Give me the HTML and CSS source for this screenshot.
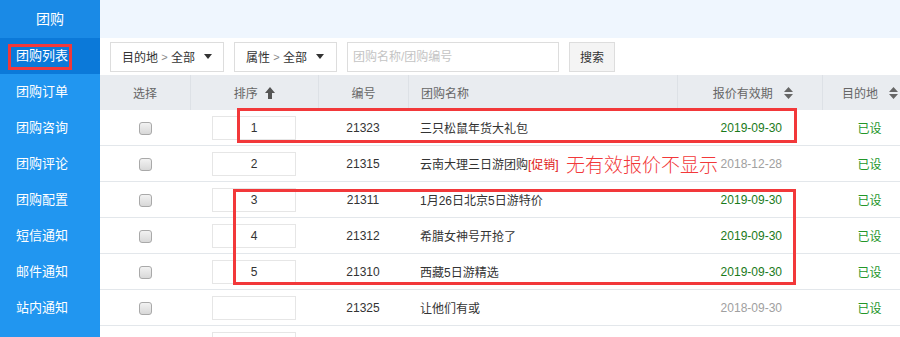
FILE: index.html
```html
<!DOCTYPE html>
<html lang="zh-CN">
<head>
    <meta charset="UTF-8">
    <title>团购列表</title>
    <link rel="stylesheet" href="styles.css">
</head>
<body>
<div class="page">
    <div class="sidebar">
        <div class="side-title">团购</div>
        <a class="side-item active">团购列表</a>
        <a class="side-item">团购订单</a>
        <a class="side-item">团购咨询</a>
        <a class="side-item">团购评论</a>
        <a class="side-item">团购配置</a>
        <a class="side-item">短信通知</a>
        <a class="side-item">邮件通知</a>
        <a class="side-item">站内通知</a>
        <a class="side-item"></a>
    </div>

    <div class="main">
        <div class="topband"></div>

        <div class="toolbar">
            <div class="select select-dest">目的地 <span class="gt">&gt;</span> 全部 <i class="caret"></i></div>
            <div class="select select-attr">属性 <span class="gt">&gt;</span> 全部 <i class="caret"></i></div>
            <input class="search-input" type="text" placeholder="团购名称/团购编号">
            <button class="search-btn">搜索</button>
        </div>

        <table class="list">
            <colgroup>
                <col class="c-check">
                <col class="c-sort">
                <col class="c-id">
                <col class="c-name">
                <col class="c-date">
                <col class="c-dest">
            </colgroup>
            <thead>
                <tr>
                    <th class="center">选择</th>
                    <th class="center">排序 <svg class="ico-up" width="10" height="12" viewBox="0 0 10 12"><path d="M5 0 L10 6 L7 6 L7 12 L3 12 L3 6 L0 6 Z" fill="#555"/></svg></th>
                    <th class="center">编号</th>
                    <th class="left">团购名称</th>
                    <th class="right">报价有效期 <svg class="ico-sort" width="9" height="12" viewBox="0 0 9 12"><path d="M4.5 0 L9 5 L0 5 Z M4.5 12 L9 7 L0 7 Z" fill="#666"/></svg></th>
                    <th class="left dest-h">目的地 <svg class="ico-sort" width="9" height="12" viewBox="0 0 9 12"><path d="M4.5 0 L9 5 L0 5 Z M4.5 12 L9 7 L0 7 Z" fill="#666"/></svg></th>
                </tr>
            </thead>
            <tbody>
                <tr>
                    <td class="center"><input type="checkbox" class="chk"></td>
                    <td class="center"><div class="sort-box">1</div></td>
                    <td class="center">21323</td>
                    <td class="left">三只松鼠年货大礼包</td>
                    <td class="right date ok">2019-09-30</td>
                    <td class="center set">已设</td>
                </tr>
                <tr>
                    <td class="center"><input type="checkbox" class="chk"></td>
                    <td class="center"><div class="sort-box">2</div></td>
                    <td class="center">21315</td>
                    <td class="left">云南大理三日游团购<span class="promo">[促销]</span></td>
                    <td class="right date old">2018-12-28</td>
                    <td class="center set">已设</td>
                </tr>
                <tr>
                    <td class="center"><input type="checkbox" class="chk"></td>
                    <td class="center"><div class="sort-box">3</div></td>
                    <td class="center">21311</td>
                    <td class="left">1月26日北京5日游特价</td>
                    <td class="right date ok">2019-09-30</td>
                    <td class="center set">已设</td>
                </tr>
                <tr>
                    <td class="center"><input type="checkbox" class="chk"></td>
                    <td class="center"><div class="sort-box">4</div></td>
                    <td class="center">21312</td>
                    <td class="left">希腊女神号开抢了</td>
                    <td class="right date ok">2019-09-30</td>
                    <td class="center set">已设</td>
                </tr>
                <tr>
                    <td class="center"><input type="checkbox" class="chk"></td>
                    <td class="center"><div class="sort-box">5</div></td>
                    <td class="center">21310</td>
                    <td class="left">西藏5日游精选</td>
                    <td class="right date ok">2019-09-30</td>
                    <td class="center set">已设</td>
                </tr>
                <tr>
                    <td class="center"><input type="checkbox" class="chk"></td>
                    <td class="center"><div class="sort-box"></div></td>
                    <td class="center">21325</td>
                    <td class="left">让他们有或</td>
                    <td class="right date old">2018-09-30</td>
                    <td class="center set">已设</td>
                </tr>
                <tr>
                    <td class="center"><input type="checkbox" class="chk"></td>
                    <td class="center"><div class="sort-box"></div></td>
                    <td class="center"></td>
                    <td class="left"></td>
                    <td class="right"></td>
                    <td class="center"></td>
                </tr>
            </tbody>
        </table>
    </div>

    <!-- 标注 -->
    <div class="mark mark-menu"></div>
    <div class="mark mark-row1"></div>
    <div class="mark mark-rows"></div>
    <div class="mark-text">无有效报价不显示</div>
</div>
</body>
</html>
```

FILE: styles.css
```css
* {
    margin: 0;
    padding: 0;
    box-sizing: border-box;
}

body {
    font-family: "Liberation Sans", "Noto Sans CJK SC", sans-serif;
    font-size: 12px;
    color: #333;
    background: #fff;
}

.page {
    position: relative;
    display: flex;
    width: 900px;
    height: 337px;
    overflow: hidden;
}

/* 侧边栏 */
.sidebar {
    width: 100px;
    flex-shrink: 0;
    background-color: #2196f0;
    display: flex;
    flex-direction: column;
}

.side-title {
    height: 38px;
    line-height: 38px;
    text-align: center;
    background-color: #1a8ae6;
    color: #fff;
    font-size: 14px;
}

.side-item {
    display: block;
    height: 36px;
    line-height: 36px;
    padding-left: 16px;
    color: #fff;
    font-size: 13px;
}

.side-item.active {
    background-color: #0b79d9;
}

/* 主区域 */
.main {
    flex: 1;
    overflow: hidden;
}

.topband {
    height: 38px;
    background-color: #eff6fe;
}

.toolbar {
    height: 37px;
    display: flex;
    align-items: center;
    padding-left: 10px;
    gap: 10px;
}

.select {
    height: 30px;
    border: 1px solid #ddd;
    display: flex;
    align-items: center;
    padding: 0 11px;
    color: #333;
    white-space: pre;
}

.select-dest {
    width: 114px;
}

.select-attr {
    width: 103px;
}

.gt {
    color: #888;
    font-size: 11px;
}

.caret {
    display: inline-block;
    width: 0;
    height: 0;
    border-left: 4px solid transparent;
    border-right: 4px solid transparent;
    border-top: 5px solid #333;
    margin-left: 6px;
}

.search-input {
    width: 212px;
    height: 30px;
    border: 1px solid #ddd;
    padding-left: 5px;
    font-family: inherit;
    font-size: 12px;
    outline: none;
}

.search-input::placeholder {
    color: #c4c4c4;
}

.search-btn {
    width: 46px;
    height: 30px;
    border: 1px solid #ddd;
    background-color: #f4f4f4;
    font-family: inherit;
    font-size: 12px;
    color: #333;
}

/* 表格 */
.list {
    table-layout: fixed;
    width: 817px;
    border-collapse: separate;
    border-spacing: 0;
}

.c-check { width: 90px; }
.c-sort { width: 128px; }
.c-id { width: 90px; }
.c-name { width: 269px; }
.c-date { width: 145px; }
.c-dest { width: 95px; }

.list th {
    height: 35px;
    background-color: #e9ecf0;
    color: #666;
    font-weight: normal;
    border-left: 1px solid #dde1e6;
}

.list th:first-child {
    border-left: none;
}

.list td {
    height: 36px;
    border-bottom: 1px solid #e3e7eb;
    white-space: nowrap;
}

.center { text-align: center; }
.left { text-align: left; padding-left: 12px; }
.right { text-align: right; padding-right: 40px; }

.list th.right { padding-right: 29px; }
.list th.dest-h { padding-left: 19px; }

.ico-up {
    vertical-align: -1px;
    margin-left: 4px;
}

.ico-sort {
    vertical-align: -1px;
    margin-left: 8px;
}

.chk {
    appearance: none;
    display: inline-block;
    width: 13px;
    height: 13px;
    border: 1px solid #a9a9a9;
    border-radius: 3px;
    background: linear-gradient(#f2f2f2, #d8d8d8);
    vertical-align: middle;
}

.sort-box {
    width: 84px;
    height: 24px;
    line-height: 22px;
    margin-left: 22px;
    border: 1px solid #e6e6e6;
    text-align: center;
}

.promo {
    color: #e02020;
}

.date.ok { color: #1a7a1a; }
.date.old { color: #a0a0a0; }
.set { color: #23962a; }

/* 标注 */
.mark {
    position: absolute;
    border: 3px solid #f2383a;
}

.mark-menu {
    left: 8px;
    top: 44px;
    width: 64px;
    height: 26px;
}

.mark-row1 {
    left: 237px;
    top: 108px;
    width: 560px;
    height: 35px;
}

.mark-rows {
    left: 233px;
    top: 189px;
    width: 563px;
    height: 96px;
}

.mark-text {
    position: absolute;
    left: 566px;
    top: 150px;
    font-size: 19px;
    color: #f2383a;
    font-family: "Noto Sans CJK SC", sans-serif;
    font-weight: 300;
}
```
